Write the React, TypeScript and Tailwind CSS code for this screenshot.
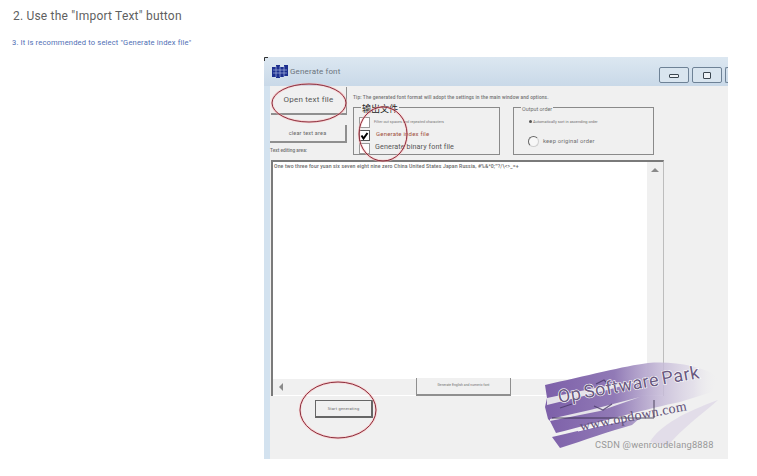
const font = "font-['Roboto','Liberation_Sans',sans-serif]";

function GroupBox({ title, className, children }: { title: string; className: string; children: React.ReactNode }) {
  return (
    <div className={`relative h-[48px] border border-[#8a8a8a] ${className}`}>
      <span className="absolute top-[-5px] left-[7px] bg-[#f0f0f0] px-[1px] leading-[12px]">{title}</span>
      {children}
    </div>
  );
}

function Ellipses() {
  return (
    <svg className="absolute top-0 left-0 pointer-events-none" width="757" height="476" fill="none">
      <path d="M264.500 61V57.500H268" stroke="#333333" strokeWidth="1" />
      <g stroke="#ffb8b8" strokeWidth="2.4" opacity="0.55">
        <ellipse cx="309" cy="103" rx="37" ry="19" />
        <ellipse cx="383" cy="134" rx="24" ry="27" />
        <ellipse cx="338" cy="410" rx="38" ry="28" />
      </g>
      <g stroke="#7d1a2a" strokeWidth="0.9">
        <ellipse cx="309" cy="103" rx="37" ry="19" />
        <ellipse cx="383" cy="134" rx="24" ry="27" />
        <ellipse cx="338" cy="410" rx="38" ry="28" />
      </g>
    </svg>
  );
}

function Watermark() {
  return (
    <svg className="absolute top-0 left-0 pointer-events-none" width="757" height="476" fill="none">
      <defs>
        <linearGradient id="brush" x1="545" y1="0" x2="718" y2="0" gradientUnits="userSpaceOnUse">
          <stop offset="0" stopColor="#7d60a9" />
          <stop offset="0.4" stopColor="#917ab6" />
          <stop offset="0.66" stopColor="#c3b7d6" stopOpacity="0.85" />
          <stop offset="0.86" stopColor="#dcd6e6" stopOpacity="0.6" />
          <stop offset="1" stopColor="#f0f0f0" stopOpacity="0" />
        </linearGradient>
      </defs>
      {/* main brush body, the slits below split it into strokes on the left */}
      <path d="M545 385 C585 376 625 366 648 363 C675 361 700 366 718 376 L712 392 L680 402 C650 408 600 422 556 433 L550 421 L548 419 L545 407 L547 398 Z" fill="url(#brush)" />
      <path d="M547 398 L600 387 L640 381 L600 392 L547 405 Z" fill="#f0f0f0" opacity="0.9" />
      <path d="M550 419 L590 410 L640 397 L600 411 L550 421 Z" fill="#f0f0f0" opacity="0.9" />
      <path d="M552 437 C585 429 610 424 640 418 L632 425 C610 431 585 440 560 448 Z" fill="url(#brush)" />
      <path d="M650 442 C660 425 685 412 718 400 C700 416 680 430 668 446 Z" fill="#d9d0e4" opacity="0.6" />
      <path d="M578 431 L640 416" stroke="#ffffff" strokeWidth="1" />
      <g stroke="#4a3a68" strokeWidth="1.200" opacity="0.8">
        <path d="M596 384 L604 380 L610 386" />
        <path d="M594 406 L603 410 L612 404" />
        <path d="M560 408 L572 404" />
      </g>
      <path d="M552 418 L654 418 L654 400" stroke="#2e2640" strokeWidth="0.8" />
    </svg>
  );
}

export default function App() {
  return (
    <div className={`relative w-[757px] h-[476px] overflow-hidden bg-white ${font}`}>
      <div className="pl-[13px] pt-[9px]">
        <h2 className="text-[12px] leading-[14px] tracking-[0.2px] text-[#5f5f5f] font-normal">2. Use the "Import Text" button</h2>
        <p className="mt-[15px] -ml-[1px] text-[7.6px] leading-[9px] tracking-[0.15px] text-[#4f6fb5]">3. It is recommended to select "Generate index file"</p>
      </div>

      <div className="mt-[10px] ml-[264px] w-[464px] h-[402px] flex flex-col bg-[#f0f0f0]">
        <div className="h-[29px] shrink-0 flex items-center pl-[8px] bg-gradient-to-b from-[#dce7f1] to-[#c9d9e8]">
          <svg width="16" height="13" viewBox="0 0 16 13" className="mr-[2px]">
            <path d="M0 2h5v10H0zM4 0h4v13H4zM8 2h4v10H8zM12 0h4v11h-4z" fill="#1c2f8f" />
            <path d="M1 5h14M1 8h14M4 1v11M8 1v11M12 1v11" stroke="#b9c6ea" strokeWidth="0.6" />
          </svg>
          <span className="text-[8px] tracking-[0.15px] text-[#6b747c]">Generate font</span>
          <div className="ml-auto flex gap-[3px] self-start mt-[10px]">
            <div className="w-[30px] h-[16px] rounded-[2px] border border-[#6e8296] flex items-center justify-center bg-[#d9e5ef]">
              <div className="w-[10px] h-[4px] mt-[2px] rounded-[1px] border border-[#3a4650] bg-[#eef2f6]" />
            </div>
            <div className="w-[30px] h-[16px] rounded-[2px] border border-[#6e8296] flex items-center justify-center bg-[#d9e5ef]">
              <div className="w-[8px] h-[7px] rounded-[1px] border border-[#3a4650] bg-[#eef2f6]" />
            </div>
            <div className="w-[3px] h-[16px] rounded-l-[2px] border-l border-y border-[#6e8296]" />
          </div>
        </div>

        <div className="flex-1 flex min-h-0">
          <div className="w-[6px] shrink-0 bg-[#d3e2ef]" />
          <div className="flex-1 flex flex-col min-w-0">
            <div className="flex h-[74px] shrink-0">
              <div className="w-[77px] ml-[1px] shrink-0 flex flex-col">
                <button className="mt-[1px] w-[76px] h-[28px] flex items-center justify-center bg-[#f0f0f0] border-b-2 border-r border-[#8f8f8f] text-[8px] tracking-[0.2px] text-[#555555]">Open text file</button>
                <button className="mt-[10px] -ml-[1px] w-[77px] h-[18px] flex items-center justify-center bg-[#f0f0f0] border-b-2 border-r-2 border-[#8f8f8f] text-[5.5px] tracking-[0.2px] text-[#666666]">clear text area</button>
                <p className="mt-[5px] -ml-[1px] text-[4.800px] leading-[6px] font-medium whitespace-nowrap text-[#707070]">Text editing area:</p>
              </div>
              <div className="ml-[5px] flex-1 min-w-0">
                <p className="mt-[7px] h-[14px] text-[4.800px] leading-[9px] font-medium tracking-[0.13px] text-[#707070] whitespace-nowrap">Tip: The generated font format will adopt the settings in the main window and options.</p>
                <div className="flex gap-[13px]">
                  <GroupBox title="输出文件" className="w-[147px] font-['Noto_Sans_CJK_SC',sans-serif] text-[9px] text-[#222222]">
                    <div className={`pl-[5px] pt-[8px] flex flex-col ${font}`}>
                      <div className="flex items-center h-[12px]">
                        <div className="w-[11px] h-[11px] border border-[#9a9a9a] bg-white" />
                        <span className="ml-[4px] text-[3.800px] -mt-[1px] text-[#777777]">Filter out spaces and repeated characters</span>
                      </div>
                      <div className="flex items-center h-[14px]">
                        <div className="w-[11px] h-[11px] border border-[#555555] bg-white flex items-center justify-center">
                          <svg width="9" height="9" viewBox="0 0 9 9"><path d="M1.500 4.500 3.500 7.500 7.500 2" stroke="#000000" strokeWidth="2" fill="none" /></svg>
                        </div>
                        <span className="ml-[6px] -mt-[3px] text-[6px] tracking-[0.2px] text-[#a0503c]">Generate index file</span>
                      </div>
                      <div className="flex items-center h-[12px]">
                        <div className="w-[11px] h-[11px] border border-[#9a9a9a] bg-white" />
                        <span className="ml-[5px] -mt-[1px] text-[7.200px] tracking-[0.1px] text-[#555555]">Generate binary font file</span>
                      </div>
                    </div>
                  </GroupBox>
                  <GroupBox title="Output order" className="w-[141px] text-[5.400px] text-[#707070]">
                    <div className="pl-[15px] pt-[11px] flex flex-col">
                      <div className="flex items-center gap-[1px]">
                        <div className="w-[3px] h-[3px] rounded-full bg-[#555555]" />
                        <span className="text-[3.900px] text-[#707070]">Automatically sort in ascending order</span>
                      </div>
                      <div className="mt-[11px] -ml-[1px] flex items-center gap-[4px]">
                        <div className="w-[11px] h-[11px] rounded-full border border-[#666666] border-r-[#cfcfcf] border-b-[#cfcfcf] bg-[#f7f7f7]" />
                        <span className="text-[5.800px] tracking-[0.2px] text-[#707070]">keep original order</span>
                      </div>
                    </div>
                  </GroupBox>
                </div>
              </div>
            </div>

            <div className="ml-[1px] w-[393px] h-[236px] shrink-0 flex flex-col border-t-2 border-l-2 border-[#7a7a7a] border-r border-r-[#bdbdbd] bg-white">
              <div className="flex-1 flex min-h-0">
                <div className="flex-1 pl-[1px] pt-[1px] min-w-0">
                  <p className="text-[5.100px] leading-[6px] font-medium tracking-[0.14px] text-[#666666] whitespace-nowrap">One two three four yuan six seven eight nine zero China United States Japan Russia, #%&*0;'"?/\&lt;&gt;_=+</p>
                </div>
                <div className="w-[16px] shrink-0 flex justify-center pt-[6px] bg-[#f0f0f0]">
                  <div className="w-0 h-0 border-x-[4px] border-x-transparent border-b-[4px] border-b-[#8a8a8a]" />
                </div>
              </div>
              <div className="h-[17px] shrink-0 flex items-center bg-[#f0f0f0] border-b border-white">
                <div className="ml-[6px] w-0 h-0 border-y-[4px] border-y-transparent border-r-[4px] border-r-[#8a8a8a]" />
                <button className="ml-[133px] w-[95px] h-[18px] flex items-center justify-center bg-[#f0f0f0] border-b-2 border-r border-l border-[#8f8f8f] text-[3.400px] text-[#707070]">Generate English and numeric font</button>
              </div>
            </div>

            <button className="mt-[4px] ml-[45px] w-[58px] h-[18px] flex items-center justify-center bg-[#f0f0f0] border-t border-l border-b-2 border-r-2 border-[#666666] text-[4px] tracking-[0.2px] text-[#666666]">Start generating</button>
          </div>
        </div>
      </div>

      <Ellipses />
      <Watermark />
      <div className="absolute top-[387px] left-[558px] -rotate-[10deg] origin-left text-[18px] leading-[20px] tracking-[0.5px] [word-spacing:-2px] font-normal whitespace-nowrap text-[#6a5a80] [paint-order:stroke_fill] [-webkit-text-stroke:1.2px_#ffffff]">Op Software Park</div>
      <div className="absolute top-[419px] left-[580px] -rotate-[11deg] origin-left font-['Liberation_Serif',serif] text-[14px] leading-[15px] tracking-[0.2px] whitespace-nowrap text-[#5f4f78]">www.opdown.com</div>
      <div className="absolute top-[439px] left-[595px] text-[9.300px] leading-[11px] tracking-[0.2px] whitespace-nowrap text-[#989898]">CSDN @wenroudelang8888</div>
    </div>
  );
}
